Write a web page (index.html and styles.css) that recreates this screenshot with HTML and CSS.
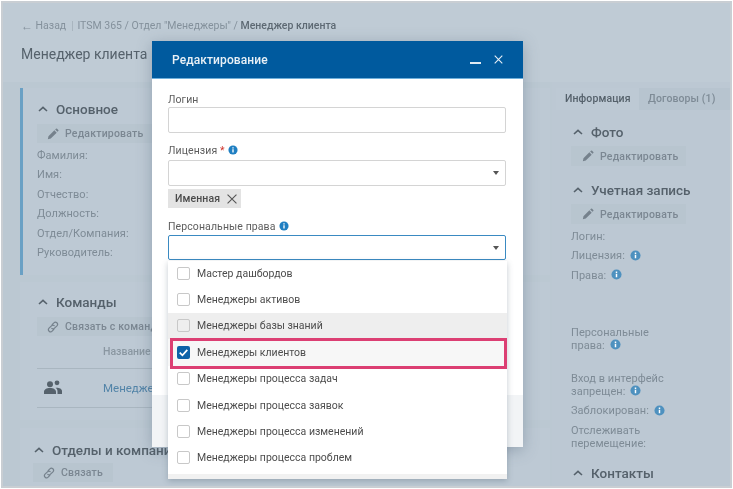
FILE: index.html
```html
<!DOCTYPE html>
<html lang="ru">
<head>
<meta charset="utf-8">
<title>Редактирование</title>
<link rel="stylesheet" href="styles.css">
</head>
<body>
<svg class="defs" width="0" height="0">
  <symbol id="pencil" viewBox="0 0 14 14"><path d="M1 13l.7-3.4L8.6 2.7l2.7 2.7-6.9 6.9zM9.5 1.8l1-1a.9.9 0 0 1 1.3 0l1.4 1.4a.9.9 0 0 1 0 1.3l-1 1z"/></symbol>
  <symbol id="link" viewBox="0 0 14 14"><path fill="none" stroke="currentColor" stroke-width="1.4" stroke-linecap="round" d="M6 4.2l2-2a2.4 2.4 0 0 1 3.6 3.4L8.8 8.4a2.4 2.4 0 0 1-3.2.2M8 9.8l-2 2a2.4 2.4 0 0 1-3.6-3.4l2.8-2.8a2.4 2.4 0 0 1 3.2-.2"/></symbol>
  <symbol id="chev" viewBox="0 0 10 6"><path fill="none" stroke="currentColor" stroke-width="1.6" d="M1 5l4-3.6L9 5"/></symbol>
  <symbol id="info" viewBox="0 0 12 12"><circle cx="6" cy="6" r="5.5" fill="currentColor"/><path fill="#fff" d="M5.2 5.2h1.6v3.8H5.2zM5.2 2.8h1.6v1.5H5.2z"/></symbol>
  <symbol id="people" viewBox="0 0 18 15"><circle cx="6" cy="4.2" r="3"/><circle cx="13" cy="2.8" r="2.4"/><path d="M0 14v-2.2C0 9.6 2.5 8 6 8s6 1.600 6 3.800V14zM13.500 14v-2.600c0-1.500-.7-2.700-1.900-3.600 2.800-.4 6.400.8 6.400 3.200V14z"/></symbol>
</svg>

<div class="frame">
  <header class="top">
    <nav class="crumbs"><span class="arrow">←</span> Назад <i class="sep"></i> ITSM 365 / Отдел "Менеджеры" / <b>Менеджер клиента</b></nav>
    <h1 class="title">Менеджер клиента</h1>
  </header>

  <div class="main">
    <div class="left">
      <section class="card card-first">
        <h2 class="head"><svg class="chev"><use href="#chev"/></svg>Основное</h2>
        <button class="btn"><svg class="ico"><use href="#pencil"/></svg>Редактировать</button>
        <p class="field">Фамилия:</p>
        <p class="field">Имя:</p>
        <p class="field">Отчество:</p>
        <p class="field">Должность:</p>
        <p class="field">Отдел/Компания:</p>
        <p class="field">Руководитель:</p>
      </section>
      <section class="card card-teams">
        <h2 class="head"><svg class="chev"><use href="#chev"/></svg>Команды</h2>
        <button class="btn"><svg class="ico"><use href="#link"/></svg>Связать с командой</button>
        <div class="thead">Название</div>
        <div class="trow">
          <svg class="people"><use href="#people"/></svg>
          <a class="tlink">Менеджеры</a>
          <span class="q">?</span>
        </div>
      </section>
      <section class="card card-depts">
        <h2 class="head"><svg class="chev"><use href="#chev"/></svg>Отделы и компании</h2>
        <button class="btn"><svg class="ico"><use href="#link"/></svg>Связать</button>
      </section>
    </div>

    <aside class="right">
      <div class="tabs">
        <span class="tab tab-on">Информация</span>
        <span class="tab">Договоры (1)</span>
      </div>
      <div class="info">
        <h2 class="head"><svg class="chev"><use href="#chev"/></svg>Фото</h2>
        <button class="btn"><svg class="ico"><use href="#pencil"/></svg>Редактировать</button>
        <h2 class="head head-2"><svg class="chev"><use href="#chev"/></svg>Учетная запись</h2>
        <button class="btn"><svg class="ico"><use href="#pencil"/></svg>Редактировать</button>
        <p class="field f-first">Логин:</p>
        <p class="field">Лицензия: <svg class="i-dim"><use href="#info"/></svg></p>
        <p class="field f-rights">Права: <svg class="i-dim"><use href="#info"/></svg></p>
        <p class="field f-two">Персональные<br>права: <svg class="i-dim"><use href="#info"/></svg></p>
        <p class="field f-two f-gap">Вход в интерфейс<br>запрещен: <svg class="i-dim"><use href="#info"/></svg></p>
        <p class="field">Заблокирован: <svg class="i-dim"><use href="#info"/></svg></p>
        <p class="field f-two">Отслеживать<br>перемещение:</p>
        <h2 class="head head-3"><svg class="chev"><use href="#chev"/></svg>Контакты</h2>
      </div>
    </aside>
  </div>

  <div class="modal">
    <div class="m-head">
      <span class="m-title">Редактирование</span>
      <span class="m-tools">
        <svg class="m-min" viewBox="0 0 11 2"><rect width="11" height="2" fill="#dfeaf3"/></svg>
        <svg class="m-x" viewBox="0 0 9 9"><path fill="none" stroke="#e6eff6" stroke-width="1.100" d="M.7.7l7.600 7.600M8.300.7L.7 8.300"/></svg>
      </span>
    </div>
    <div class="m-body">
      <label class="lab">Логин</label>
      <div class="input input-login"></div>
      <label class="lab lab-lic">Лицензия <em>*</em> <svg class="i-on"><use href="#info"/></svg></label>
      <div class="input"><span class="caret"></span></div>
      <span class="chip">Именная <svg class="chip-x" viewBox="0 0 9 9"><path fill="none" stroke="#555" stroke-width="1" d="M.5.5l8 8M8.500.5l-8 8"/></svg></span>
      <label class="lab lab-per">Персональные права <svg class="i-on"><use href="#info"/></svg></label>
      <div class="input input-focus"><span class="caret"></span></div>
    </div>
    <div class="m-foot"></div>

    <ul class="dd">
      <li class="opt"><span class="box"></span>Мастер дашбордов</li>
      <li class="opt"><span class="box"></span>Менеджеры активов</li>
      <li class="opt opt-hover"><span class="box"></span>Менеджеры базы знаний</li>
      <li class="opt opt-marked"><span class="box box-on"><svg viewBox="0 0 12 12"><path fill="none" stroke="#fff" stroke-width="1.600" d="M2.500 6.200l2.500 2.400 4.500-5"/></svg></span>Менеджеры клиентов</li>
      <li class="opt"><span class="box"></span>Менеджеры процесса задач</li>
      <li class="opt"><span class="box"></span>Менеджеры процесса заявок</li>
      <li class="opt"><span class="box"></span>Менеджеры процесса изменений</li>
      <li class="opt"><span class="box"></span>Менеджеры процесса проблем</li>
      <li class="dd-end"></li>
    </ul>
  </div>
</div>
</body>
</html>
```

FILE: styles.css
```css
* { box-sizing: border-box; }
html, body { margin: 0; height: 489px; overflow: hidden; background: #fff; }
body { font-family: Roboto, "Liberation Sans", sans-serif; color: #7e8b96; }
.defs { position: absolute; }
svg { display: inline-block; }
p, h1, h2, ul { margin: 0; padding: 0; }

.frame {
  position: relative;
  width: 731px;
  height: 487px;
  margin: 1px;
  border: 2px solid #c9ced3;
  background: #bfcbd5;
  overflow: hidden;
  filter: blur(.45px);
}

.top { height: 79px; padding: 15px 0 0 18px; }
.crumbs { font-size: 10.5px; line-height: 16px; color: #84919c; display: flex; align-items: center; white-space: pre; }
.crumbs b { font-weight: 500; color: #5d6973; }
.arrow { font-size: 12px; }
.sep { width: 1px; height: 10px; background: #a9b5bf; margin: 0 2px 0 3px; }
.title { margin-top: 9px; font-size: 14px; line-height: 22px; font-weight: 400; color: #56626c; }

.main { display: flex; height: 404px; background: #bbc8d2; }
.left { width: 549px; padding: 6px 0 0 17px; flex: none; }
.card { width: 530px; background: #bdc9d4; position: relative; }
.card-first { height: 187px; border-left: 3px solid #6aa0c4; padding: 12px 0 0 14px; }
.card-teams { height: 138px; margin-top: 7px; padding: 11px 0 0 17px; }
.card-depts { height: 60px; margin-top: 8px; padding: 13px 0 0 13px; }

.head { display: flex; align-items: center; font-size: 13.5px; line-height: 18px; font-weight: 500; color: #55616b; }
.chev { width: 10px; height: 6px; margin: 0 8px 0 1px; color: #55616b; }
.btn {
  display: flex; align-items: center; gap: 6px;
  height: 19px; margin-top: 6px; padding: 0 10px;
  border: 0; background: #b8c5cf;
  font: 500 10.5px Roboto, sans-serif; letter-spacing: .2px; color: #7b8792;
  white-space: nowrap;
}
.card-depts .btn { margin-top: 4px; }
.ico { flex: none; width: 12px; height: 12px; fill: #75818c; color: #75818c; }
.field { font-size: 11px; line-height: 13px; margin-top: 6.400px; color: #7e8b96; letter-spacing: .05px; }
.card-first .field:first-of-type { margin-top: 6px; }

.thead { margin: 9px 0 0 66px; font: 500 10.5px/14px Roboto, sans-serif; color: #8a97a1; }
.trow { display: flex; align-items: center; height: 40px; margin: 9px 0 0 0; width: 476px; border-top: 1px solid #a9b6c0; border-bottom: 1px solid #a9b6c0; position: relative; }
.people { width: 18px; height: 15px; margin: 0 0 2px 7px; fill: #56626c; }
.tlink { margin-left: 41px; font-size: 11.5px; color: #5284a8; }
.q { margin-left: auto; margin-right: 6px; font-size: 12px; color: #8a97a1; }

.right { flex: 1; padding-top: 6px; background: #bcc8d3; }
.tabs { display: flex; height: 22px; margin-left: 4px; background: #b7c4cf; font-size: 10.5px; line-height: 22px; letter-spacing: .1px; }
.tab { padding: 0 9px; font-weight: 500; color: #7e8b96; }
.tab-on { width: 83px; background: #bdc9d4; color: #55616b; }
.info { padding: 13px 0 0 19px; }
.info .head { height: 18px; padding-left: 1px; }
.info .btn { margin-top: 5px; width: 115px; height: 20px; padding-left: 11px; }
.info .head-2 { margin-top: 15px; }
.info .f-first { margin-top: 6px; }
.info .f-rights + .f-two { margin-top: 44px; }
.info .f-gap { margin-top: 20px; }
.i-dim { width: 11px; height: 11px; color: #4e91bf; vertical-align: -1.500px; margin-left: 2px; }
.info .head-3 { margin-top: 14px; }

.modal {
  position: absolute; left: 149px; top: 38px;
  width: 371px; height: 406px;
  display: flex; flex-direction: column;
  background: #fff;
  box-shadow: 0 3px 14px rgba(70, 90, 110, .35);
}
.m-head { flex: none; height: 38px; display: flex; align-items: center; justify-content: space-between; padding: 0 20px 0 20px; background: #005a9e; border-bottom: 1px solid #6fb0dc; }
.m-title { font-size: 12px; font-weight: 500; letter-spacing: .1px; color: #e8f0f6; }
.m-tools { display: flex; align-items: center; gap: 13px; }
.m-min { width: 11px; height: 2px; margin-top: 7px; }
.m-x { width: 9px; height: 9px; }
.m-body { flex: 1; padding: 13px 17px 0 16px; }
.lab { display: block; height: 15px; padding-top: 1px; font-size: 10.5px; line-height: 14px; color: #5d5d5d; letter-spacing: .1px; }
.lab em { font-style: normal; color: #d0342c; }
.lab-lic { margin-top: 10px; }
.lab-per { margin-top: 11px; }
.i-on { width: 10px; height: 10px; color: #1f7fc2; vertical-align: -1px; margin-left: 1px; }
.input { position: relative; height: 26px; margin-top: 2px; border: 1px solid #d4d4d4; border-radius: 2px; background: #fff; }
.input-login { margin-top: 0; }
.input-focus { height: 25px; margin-top: 1px; border-color: #3a8ac2; }
.caret { position: absolute; right: 6px; top: 10px; border-left: 3.500px solid transparent; border-right: 3.500px solid transparent; border-top: 4px solid #555; }
.chip { display: flex; align-items: center; gap: 7px; width: 73px; height: 19px; margin-top: 3px; padding-left: 7px; background: #e3e3e3; font-size: 10.5px; font-weight: 500; letter-spacing: .1px; color: #4b4b4b; }
.chip-x { width: 10px; height: 10px; }
.m-foot { flex: none; height: 52px; background: #f2f4f6; }

.dd {
  position: absolute; left: 16px; top: 220px;
  width: 339px; height: 218px;
  list-style: none; background: #fff; overflow: hidden;
  box-shadow: 0 2px 6px rgba(60, 80, 100, .3);
}
.opt { position: relative; display: flex; align-items: center; height: 26.400px; padding-left: 9px; font-size: 10.5px; color: #4d4d4d; }
.opt:first-child { margin-top: -1px; }
.box { flex: none; width: 13px; height: 13px; margin-right: 7px; border: 1px solid #c8c8c8; border-radius: 2px; background: #fff; }
.box-on { border: 0; background: #0d62a8; }
.box-on svg { display: block; width: 13px; height: 13px; }
.opt-hover { background: #eeeeee; }
.opt-hover .box { background: #eeeeee; }
.opt-marked { background: #f7f7f7; }
.opt-marked::after { content: ""; position: absolute; left: 2px; right: 0; top: -1px; bottom: -3px; border: 3px solid #dc3f73; }
.dd-end { height: 6px; margin-top: 3px; background: #f1f1f1; }
```
